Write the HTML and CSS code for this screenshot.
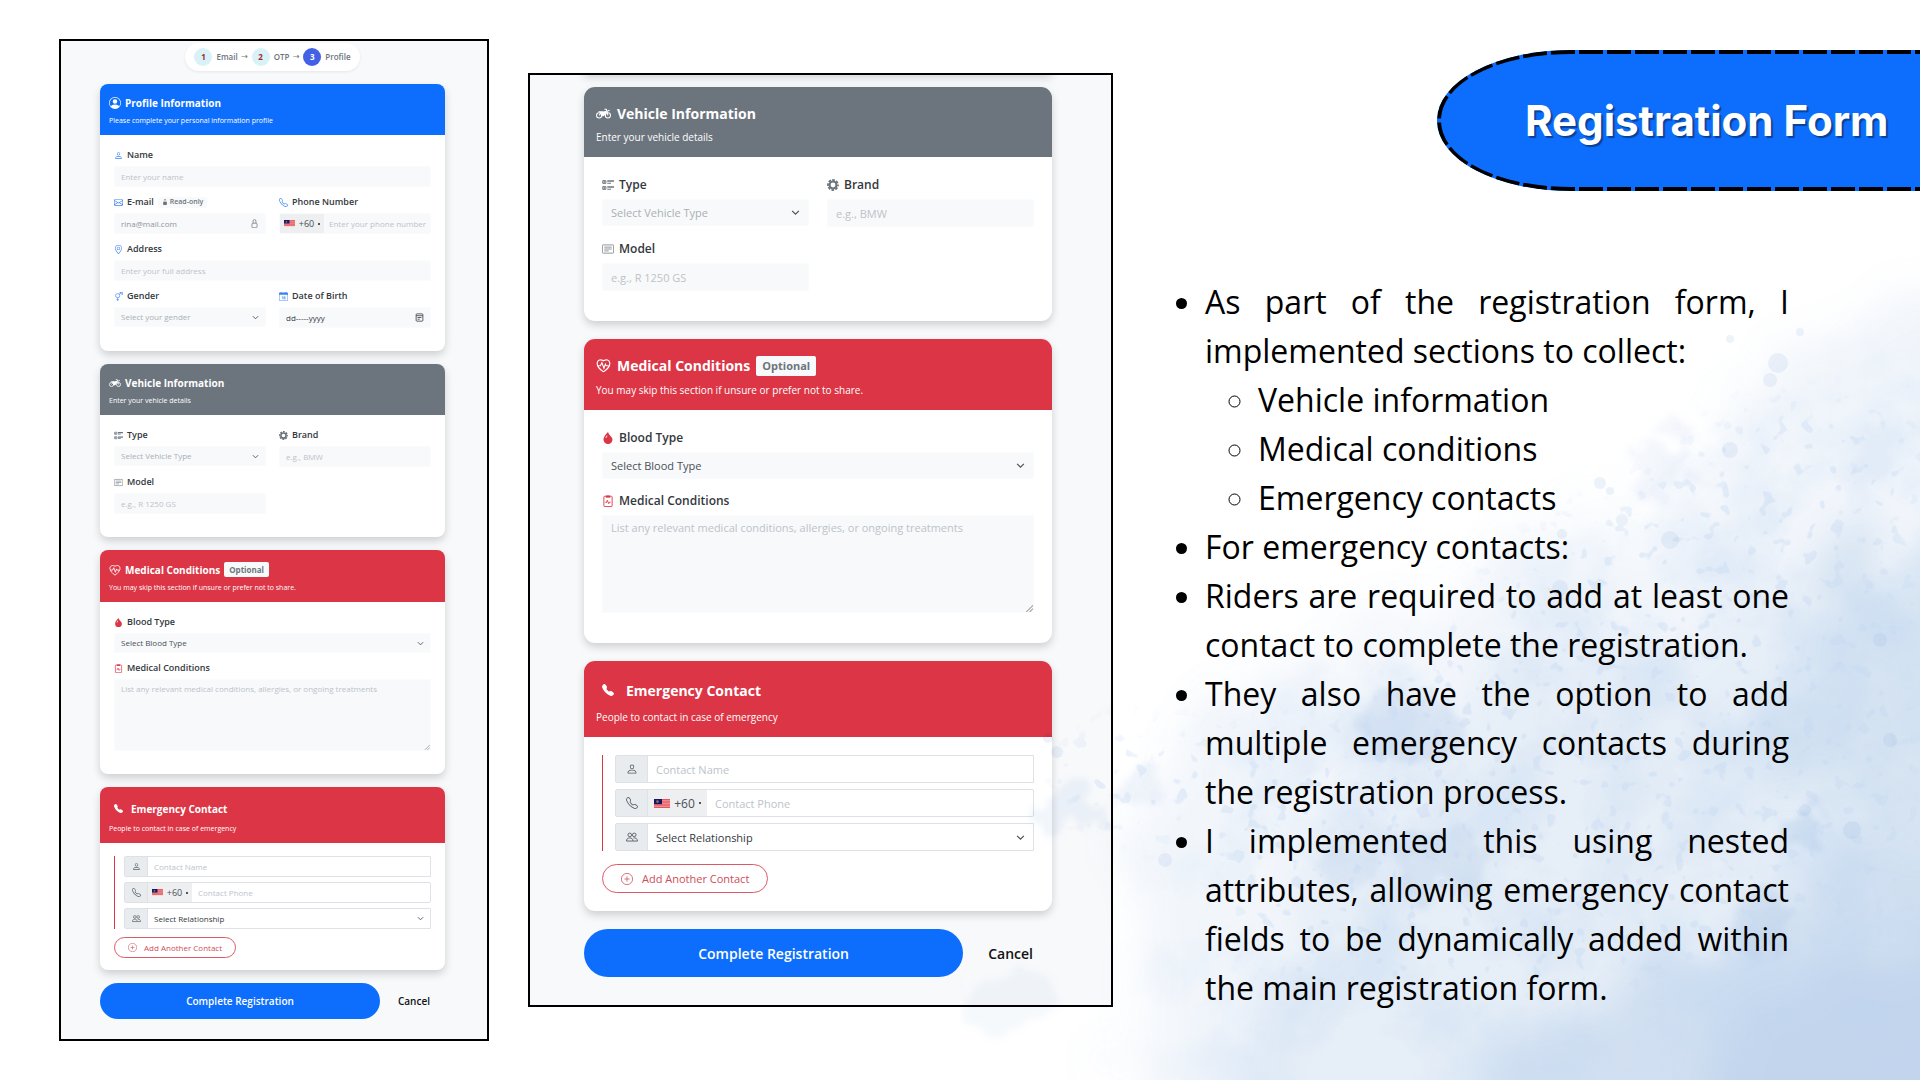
FILE: index.html
```html
<!DOCTYPE html>
<html lang="en">
<head>
<meta charset="utf-8">
<meta name="viewport" content="width=device-width, initial-scale=1">
<title>Registration Form</title>
<link rel="stylesheet" href="styles.css">
</head>
<body>

<svg class="sprite" aria-hidden="true">
  <symbol id="i-person-circle" viewBox="0 0 16 16"><path d="M11 6a3 3 0 1 1-6 0 3 3 0 0 1 6 0"/><path fill-rule="evenodd" d="M0 8a8 8 0 1 1 16 0A8 8 0 0 1 0 8m8-7a7 7 0 0 0-5.468 11.37C3.242 11.226 4.805 10 8 10s4.757 1.225 5.468 2.37A7 7 0 0 0 8 1"/></symbol>
  <symbol id="i-person" viewBox="0 0 16 16"><path d="M8 8a3 3 0 1 0 0-6 3 3 0 0 0 0 6m2-3a2 2 0 1 1-4 0 2 2 0 0 1 4 0m4 8c0 1-1 1-1 1H3s-1 0-1-1 1-4 6-4 6 3 6 4m-1-.004c-.001-.246-.154-.986-.832-1.664C11.516 10.68 10.289 10 8 10s-3.516.68-4.168 1.332c-.678.678-.83 1.418-.832 1.664z"/></symbol>
  <symbol id="i-people" viewBox="0 0 16 16"><g fill="none" stroke="currentColor" stroke-width="1.2"><circle cx="5" cy="5.2" r="2.4"/><circle cx="11" cy="5.2" r="2.4"/><path d="M.7 13.4c0-2.600 1.600-4.200 4.300-4.200s4.300 1.600 4.300 4.200zM10 9.300c3.400-.5 5.300 1.300 5.300 4.100H9.500"/></g></symbol>
  <symbol id="i-envelope" viewBox="0 0 16 16"><path d="M0 4a2 2 0 0 1 2-2h12a2 2 0 0 1 2 2v8a2 2 0 0 1-2 2H2a2 2 0 0 1-2-2zm2-1a1 1 0 0 0-1 1v.217l7 4.200 7-4.200V4a1 1 0 0 0-1-1zm13 2.383-4.708 2.825L15 11.105zm-.034 6.876-5.640-3.471L8 9.583l-1.326-.795-5.640 3.470A1 1 0 0 0 2 13h12a1 1 0 0 0 .966-.741M1 11.105l4.708-2.897L1 5.383z"/></symbol>
  <symbol id="i-lock-fill" viewBox="0 0 16 16"><path d="M8 1a2 2 0 0 1 2 2v4H6V3a2 2 0 0 1 2-2m3 6V3a3 3 0 0 0-6 0v4a2 2 0 0 0-2 2v5a2 2 0 0 0 2 2h6a2 2 0 0 0 2-2V9a2 2 0 0 0-2-2"/></symbol>
  <symbol id="i-lock" viewBox="0 0 16 16"><path fill="none" stroke="currentColor" stroke-width="1.300" d="M5.500 7.500V3.500a2.500 2.500 0 0 1 5 0v4M3.500 9a1.500 1.500 0 0 1 1.500-1.500h6A1.500 1.500 0 0 1 12.500 9v5a1.500 1.500 0 0 1-1.500 1.500H5A1.500 1.500 0 0 1 3.500 14z"/></symbol>
  <symbol id="i-phone" viewBox="0 0 16 16"><path d="M3.654 1.328a.678.678 0 0 0-1.015-.063L1.605 2.300c-.483.484-.661 1.169-.45 1.770a17.600 17.600 0 0 0 4.168 6.608 17.600 17.600 0 0 0 6.608 4.168c.601.211 1.286.033 1.770-.45l1.034-1.034a.678.678 0 0 0-.063-1.015l-2.307-1.794a.68.68 0 0 0-.58-.122l-2.190.547a1.750 1.750 0 0 1-1.657-.459L5.482 8.062a1.750 1.750 0 0 1-.46-1.657l.548-2.190a.68.68 0 0 0-.122-.58zM1.884.511a1.745 1.745 0 0 1 2.612.163L6.290 2.980c.329.423.445.974.315 1.494l-.547 2.190a.68.68 0 0 0 .178.643l2.457 2.457a.68.68 0 0 0 .644.178l2.189-.547a1.750 1.750 0 0 1 1.494.315l2.306 1.794c.829.645.905 1.870.163 2.611l-1.034 1.034c-.74.74-1.846 1.065-2.877.702a18.600 18.600 0 0 1-7.010-4.420 18.600 18.600 0 0 1-4.420-7.009c-.362-1.030-.037-2.137.703-2.877z"/></symbol>
  <symbol id="i-phone-fill" viewBox="0 0 16 16"><path d="M1.885.511a1.745 1.745 0 0 1 2.610.163L6.290 2.980c.329.423.445.974.315 1.494l-.547 2.190a.68.68 0 0 0 .178.643l2.457 2.457a.68.68 0 0 0 .644.178l2.189-.547a1.750 1.750 0 0 1 1.494.315l2.306 1.794c.829.645.905 1.870.163 2.611l-1.034 1.034c-.74.74-1.846 1.065-2.877.702a18.600 18.600 0 0 1-7.010-4.420 18.600 18.600 0 0 1-4.420-7.009c-.362-1.030-.037-2.137.703-2.877z"/></symbol>
  <symbol id="i-pin" viewBox="0 0 16 16"><path d="M12.166 8.940c-.524 1.062-1.234 2.120-1.960 3.070A32 32 0 0 1 8 14.580a32 32 0 0 1-2.206-2.570c-.726-.95-1.436-2.008-1.960-3.070C3.304 7.867 3 6.862 3 6a5 5 0 0 1 10 0c0 .862-.305 1.867-.834 2.940M8 16s6-5.686 6-10A6 6 0 0 0 2 6c0 4.314 6 10 6 10"/><path d="M8 8a2 2 0 1 1 0-4 2 2 0 0 1 0 4m0 1a3 3 0 1 0 0-6 3 3 0 0 0 0 6"/></symbol>
  <symbol id="i-gender" viewBox="0 0 16 16"><path fill="none" stroke="currentColor" stroke-width="1.200" d="M10.200 6.500a3.700 3.700 0 1 1-7.400 0 3.700 3.700 0 0 1 7.400 0M6.500 10.200V16M4.500 13.500h4M9.200 3.900 13 .8M10.500.6H15v4.200M10 1l4.500 3.500"/></symbol>
  <symbol id="i-calendar" viewBox="0 0 16 16"><path fill="none" stroke="currentColor" d="M.5 3v11a1.500 1.500 0 0 0 1.500 1.500h12a1.500 1.500 0 0 0 1.500-1.500V3"/><path d="M0 5V2.500A1.500 1.500 0 0 1 1.500 1H3V0h1.500v1h7V0H13v1h1.500A1.500 1.500 0 0 1 16 2.500V5z"/><path fill="none" stroke="currentColor" stroke-width=".9" d="M5 8.500 6.200 8v4.500M8.500 8.300h2.400v4.200H8.500zM8.500 10.400h2.400"/></symbol>
  <symbol id="i-picker" viewBox="0 0 16 16"><path fill="none" stroke="currentColor" stroke-width="1.400" d="M2 3a1.500 1.500 0 0 1 1.500-1.500h9A1.500 1.500 0 0 1 14 3v10a1.500 1.500 0 0 1-1.500 1.500h-9A1.500 1.500 0 0 1 2 13zM2 4.800h12M4.500 8h7M4.500 11h4"/></symbol>
  <symbol id="i-bike" viewBox="0 0 16 16"><g fill="none" stroke="currentColor" stroke-width="1.100"><circle cx="3.300" cy="10" r="2.700"/><circle cx="12.700" cy="10" r="2.700"/><path d="M3.300 10 6 6.500h5l-3 4H5.500M9 3.500h2L12.700 10M12 5.500l2.500-1"/></g><path d="M2 5.500h4.500l1 .8 3-1.300.8 1-3 4.500H6L5.500 8z"/></symbol>
  <symbol id="i-type" viewBox="0 0 16 16"><g fill="none" stroke="currentColor" stroke-width="1.300"><path d="M1 2.200h4.200v3.600H1zM1 10.200h4.200v3.600H1z"/></g><path d="M7 1.800h9v2H7zM7 5h5v1.200H7zM7 9.800h9v2H7zM7 13h5v1.200H7zM2 3h2v2H2zM2 11h2v2H2z"/></symbol>
  <symbol id="i-gear" viewBox="0 0 16 16"><g fill="none" stroke="currentColor"><circle cx="8" cy="8" r="4.600" stroke-width="2.800"/><circle cx="8" cy="8" r="6.700" stroke-width="2.400" stroke-dasharray="3.400 1.862" stroke-dashoffset="1.700"/></g></symbol>
  <symbol id="i-card" viewBox="0 0 16 16"><path fill="none" stroke="currentColor" d="M.5 3.500a1 1 0 0 1 1-1h13a1 1 0 0 1 1 1v9a1 1 0 0 1-1 1h-13a1 1 0 0 1-1-1zM3 5.500h10M3 8h10M3 10.500h6"/></symbol>
  <symbol id="i-heart" viewBox="0 0 16 16"><path fill="none" stroke="currentColor" stroke-width="1.200" d="M8 14.800C-3 7.500 1.500-.8 8 3c6.500-3.800 11 4.500 0 11.800M2.500 8.200h2.200L6.300 5l2.200 6L10 6.500l.9 1.700h2.600"/></symbol>
  <symbol id="i-drop" viewBox="0 0 16 16"><path fill-rule="evenodd" d="M8 16a6 6 0 0 0 6-6c0-1.655-1.122-2.904-2.432-4.362C10.254 4.176 8.750 2.503 8 0c0 0-6 5.686-6 10a6 6 0 0 0 6 6M6.646 4.646l.708.708c-.29.290-1.128 1.311-1.907 2.870l-.894-.448c.82-1.641 1.717-2.753 2.093-3.130"/></symbol>
  <symbol id="i-clip" viewBox="0 0 16 16"><path fill="none" stroke="currentColor" stroke-width="1.200" d="M5 1.800H3.300a.8.800 0 0 0-.8.800v12a.8.800 0 0 0 .8.800h9.400a.8.800 0 0 0 .8-.8v-12a.8.800 0 0 0-.8-.8H11M4.500 10H6l1-3 2 4.500L10 9.500h1.500"/><path d="M5 .5h6v3H5z"/></symbol>
  <symbol id="i-plus" viewBox="0 0 16 16"><path fill="none" stroke="currentColor" d="M8 .5a7.500 7.500 0 1 1 0 15 7.500 7.500 0 0 1 0-15M8 4.500v7M4.500 8h7"/></symbol>
  <symbol id="i-flag" viewBox="0 0 16 9"><path fill="#f08a8c" d="M0 0h16v9H0z"/><path fill="#e0575f" d="M8 0h8v1H8zM8 2.600h8v1H8zM0 5.500h16v1H0zM0 8h16v1H0z"/><path fill="#1b1464" d="M0 0h8v5.200H0z"/><circle cx="3.500" cy="2.600" r="1.300" fill="#8d7c5a"/></symbol>
</svg>

<main class="slide">

  <form class="panel panel--small">
    <ol class="steps">
      <li class="steps__item"><span class="steps__dot">1</span>Email</li>
      <li class="steps__arrow" aria-hidden="true">→</li>
      <li class="steps__item"><span class="steps__dot">2</span>OTP</li>
      <li class="steps__arrow" aria-hidden="true">→</li>
      <li class="steps__item"><span class="steps__dot steps__dot--on">3</span>Profile</li>
    </ol>

    <section class="card">
      <header class="card__head card__head--blue">
        <h2 class="card__title"><svg class="icon"><use href="#i-person-circle"/></svg>Profile Information</h2>
        <p class="card__sub">Please complete your personal information profile</p>
      </header>
      <div class="card__body tone-blue">
        <div class="field field--wide">
          <label class="field__label" for="a-name"><svg class="icon"><use href="#i-person"/></svg>Name</label>
          <input class="control" id="a-name" type="text" placeholder="Enter your name">
        </div>
        <div class="field">
          <label class="field__label" for="a-mail"><svg class="icon"><use href="#i-envelope"/></svg>E-mail <span class="readonly"><svg class="icon"><use href="#i-lock-fill"/></svg>Read-only</span></label>
          <div class="control control--box">
            <input class="bare bare--muted" id="a-mail" type="email" value="rina@mail.com" readonly>
            <svg class="icon icon--end"><use href="#i-lock"/></svg>
          </div>
        </div>
        <div class="field">
          <label class="field__label" for="a-phone"><svg class="icon"><use href="#i-phone"/></svg>Phone Number</label>
          <div class="control control--phone">
            <button class="dial" type="button" aria-label="Country code"><svg class="flag"><use href="#i-flag"/></svg>+60<span class="dial__caret"></span></button>
            <input class="bare" id="a-phone" type="tel" placeholder="Enter your phone number">
          </div>
        </div>
        <div class="field field--wide">
          <label class="field__label" for="a-address"><svg class="icon"><use href="#i-pin"/></svg>Address</label>
          <input class="control" id="a-address" type="text" placeholder="Enter your full address">
        </div>
        <div class="field">
          <label class="field__label" for="a-gender"><svg class="icon"><use href="#i-gender"/></svg>Gender</label>
          <select class="control control--select control--empty" id="a-gender"><option>Select your gender</option></select>
        </div>
        <div class="field">
          <label class="field__label" for="a-birth"><svg class="icon"><use href="#i-calendar"/></svg>Date of Birth</label>
          <div class="control control--box">
            <input class="bare bare--dark" id="a-birth" type="text" value="dd-----yyyy">
            <svg class="icon icon--end icon--dark"><use href="#i-picker"/></svg>
          </div>
        </div>
      </div>
    </section>

    <section class="card">
      <header class="card__head card__head--gray">
        <h2 class="card__title"><svg class="icon"><use href="#i-bike"/></svg>Vehicle Information</h2>
        <p class="card__sub">Enter your vehicle details</p>
      </header>
      <div class="card__body tone-gray">
        <div class="field">
          <label class="field__label" for="a-type"><svg class="icon"><use href="#i-type"/></svg>Type</label>
          <select class="control control--select control--empty" id="a-type"><option>Select Vehicle Type</option></select>
        </div>
        <div class="field">
          <label class="field__label" for="a-brand"><svg class="icon"><use href="#i-gear"/></svg>Brand</label>
          <input class="control" id="a-brand" type="text" placeholder="e.g., BMW">
        </div>
        <div class="field">
          <label class="field__label" for="a-model"><svg class="icon"><use href="#i-card"/></svg>Model</label>
          <input class="control" id="a-model" type="text" placeholder="e.g., R 1250 GS">
        </div>
      </div>
    </section>

    <section class="card">
      <header class="card__head card__head--red">
        <h2 class="card__title card__title--badge"><svg class="icon"><use href="#i-heart"/></svg>Medical Conditions<span class="badge">Optional</span></h2>
        <p class="card__sub">You may skip this section if unsure or prefer not to share.</p>
      </header>
      <div class="card__body tone-red">
        <div class="field field--wide">
          <label class="field__label" for="a-blood"><svg class="icon"><use href="#i-drop"/></svg>Blood Type</label>
          <select class="control control--select" id="a-blood"><option>Select Blood Type</option></select>
        </div>
        <div class="field field--wide">
          <label class="field__label" for="a-medical"><svg class="icon"><use href="#i-clip"/></svg>Medical Conditions</label>
          <textarea class="control control--area" id="a-medical" placeholder="List any relevant medical conditions, allergies, or ongoing treatments"></textarea>
        </div>
      </div>
    </section>

    <section class="card">
      <header class="card__head card__head--red">
        <h2 class="card__title card__title--tall"><svg class="icon"><use href="#i-phone-fill"/></svg>Emergency Contact</h2>
        <p class="card__sub">People to contact in case of emergency</p>
      </header>
      <div class="contacts">
        <div class="contacts__list">
          <div class="group"><label class="group__icon" for="a-cname" aria-label="Contact name"><svg class="icon"><use href="#i-person"/></svg></label><input class="bare" id="a-cname" type="text" placeholder="Contact Name"></div>
          <div class="group group--round"><label class="group__icon" for="a-cphone" aria-label="Contact phone"><svg class="icon"><use href="#i-phone"/></svg></label><button class="dial" type="button" aria-label="Country code"><svg class="flag"><use href="#i-flag"/></svg>+60<span class="dial__caret"></span></button><input class="bare" id="a-cphone" type="tel" placeholder="Contact Phone"></div>
          <div class="group"><label class="group__icon" for="a-crel" aria-label="Relationship"><svg class="icon"><use href="#i-people"/></svg></label><select class="bare control--select" id="a-crel"><option>Select Relationship</option></select></div>
        </div>
        <button class="add" type="button"><svg class="icon"><use href="#i-plus"/></svg>Add Another Contact</button>
      </div>
    </section>

    <div class="actions">
      <button class="submit" type="submit">Complete Registration</button>
      <a class="cancel" href="#">Cancel</a>
    </div>
  </form>

  <form class="panel panel--large">
    <section class="card">
      <header class="card__head card__head--gray">
        <h2 class="card__title"><svg class="icon"><use href="#i-bike"/></svg>Vehicle Information</h2>
        <p class="card__sub">Enter your vehicle details</p>
      </header>
      <div class="card__body tone-gray">
        <div class="field">
          <label class="field__label" for="b-type"><svg class="icon"><use href="#i-type"/></svg>Type</label>
          <select class="control control--select control--empty" id="b-type"><option>Select Vehicle Type</option></select>
        </div>
        <div class="field">
          <label class="field__label" for="b-brand"><svg class="icon"><use href="#i-gear"/></svg>Brand</label>
          <input class="control" id="b-brand" type="text" placeholder="e.g., BMW">
        </div>
        <div class="field">
          <label class="field__label" for="b-model"><svg class="icon"><use href="#i-card"/></svg>Model</label>
          <input class="control" id="b-model" type="text" placeholder="e.g., R 1250 GS">
        </div>
      </div>
    </section>

    <section class="card">
      <header class="card__head card__head--red">
        <h2 class="card__title card__title--badge"><svg class="icon"><use href="#i-heart"/></svg>Medical Conditions<span class="badge">Optional</span></h2>
        <p class="card__sub">You may skip this section if unsure or prefer not to share.</p>
      </header>
      <div class="card__body tone-red">
        <div class="field field--wide">
          <label class="field__label" for="b-blood"><svg class="icon"><use href="#i-drop"/></svg>Blood Type</label>
          <select class="control control--select" id="b-blood"><option>Select Blood Type</option></select>
        </div>
        <div class="field field--wide">
          <label class="field__label" for="b-medical"><svg class="icon"><use href="#i-clip"/></svg>Medical Conditions</label>
          <textarea class="control control--area" id="b-medical" placeholder="List any relevant medical conditions, allergies, or ongoing treatments"></textarea>
        </div>
      </div>
    </section>

    <section class="card">
      <header class="card__head card__head--red">
        <h2 class="card__title card__title--tall"><svg class="icon"><use href="#i-phone-fill"/></svg>Emergency Contact</h2>
        <p class="card__sub">People to contact in case of emergency</p>
      </header>
      <div class="contacts">
        <div class="contacts__list">
          <div class="group"><label class="group__icon" for="b-cname" aria-label="Contact name"><svg class="icon"><use href="#i-person"/></svg></label><input class="bare" id="b-cname" type="text" placeholder="Contact Name"></div>
          <div class="group group--round"><label class="group__icon" for="b-cphone" aria-label="Contact phone"><svg class="icon"><use href="#i-phone"/></svg></label><button class="dial" type="button" aria-label="Country code"><svg class="flag"><use href="#i-flag"/></svg>+60<span class="dial__caret"></span></button><input class="bare" id="b-cphone" type="tel" placeholder="Contact Phone"></div>
          <div class="group"><label class="group__icon" for="b-crel" aria-label="Relationship"><svg class="icon"><use href="#i-people"/></svg></label><select class="bare control--select" id="b-crel"><option>Select Relationship</option></select></div>
        </div>
        <button class="add" type="button"><svg class="icon"><use href="#i-plus"/></svg>Add Another Contact</button>
      </div>
    </section>

    <div class="actions">
      <button class="submit" type="submit">Complete Registration</button>
      <a class="cancel" href="#">Cancel</a>
    </div>
  </form>

  <article class="notes">
    <header class="banner">
      <svg class="banner__edge" viewBox="0 0 483 141" preserveAspectRatio="xMinYMid slice" aria-hidden="true">
        <g fill="none" stroke="#000" stroke-width="4" stroke-dasharray="24 4" stroke-dashoffset="-2">
          <path d="M2 70.500C2 32 58 2 134 2H1200"/>
          <path d="M2 70.500C2 109 58 139 134 139H1200"/>
        </g>
      </svg>
      <h1 class="banner__title">Registration Form</h1>
    </header>
    <ul class="points">
      <li>As part of the registration form, I implemented sections to collect:
        <ul class="points__sub">
          <li>Vehicle information</li>
          <li>Medical conditions</li>
          <li>Emergency contacts</li>
        </ul>
      </li>
      <li>For emergency contacts:</li>
      <li>Riders are required to add at least one contact to complete the registration.</li>
      <li>They also have the option to add multiple emergency contacts during the registration process.</li>
      <li>I implemented this using nested attributes, allowing emergency contact fields to be dynamically added within the main registration form.</li>
    </ul>
  </article>

  <svg class="wash" viewBox="0 0 960 860" aria-hidden="true">
    <defs>
      <filter id="soft" x="-20%" y="-20%" width="140%" height="140%"><feTurbulence type="fractalNoise" baseFrequency=".012" numOctaves="5" seed="4"/><feDisplacementMap in="SourceGraphic" scale="150" xChannelSelector="R" yChannelSelector="G"/><feGaussianBlur stdDeviation="18"/></filter>
      <filter id="rough" x="-20%" y="-20%" width="140%" height="140%"><feTurbulence type="fractalNoise" baseFrequency=".03" numOctaves="5" seed="9"/><feDisplacementMap in="SourceGraphic" scale="70" xChannelSelector="R" yChannelSelector="G"/><feGaussianBlur stdDeviation="3"/></filter>
      <filter id="cloud" x="-20%" y="-20%" width="140%" height="140%"><feTurbulence type="fractalNoise" baseFrequency=".011" numOctaves="6" seed="33"/><feColorMatrix values="0 0 0 0 .5  0 0 0 0 .66  0 0 0 0 .87  0 0 3 0 -1.100" result="n"/><feGaussianBlur in="SourceGraphic" stdDeviation="36" result="s"/><feComposite in="n" in2="s" operator="in"/></filter>
      <filter id="drops" x="-20%" y="-20%" width="140%" height="140%"><feTurbulence type="fractalNoise" baseFrequency=".07" numOctaves="2" seed="21"/><feColorMatrix values="0 0 0 0 .55  0 0 0 0 .69  0 0 0 0 .88  0 14 0 0 -9" result="n"/><feGaussianBlur in="SourceGraphic" stdDeviation="25" result="s"/><feComposite in="n" in2="s" operator="in"/></filter>
    </defs>
    <g filter="url(#soft)" fill="#7fa5da">
      <path opacity=".1" d="M1060 60 850 110 770 230 650 320 560 340 400 410 300 450 200 520 180 640 200 760 140 960H1060z"/>
      <path opacity=".1" d="M1060 240 900 340 800 400 640 440 500 480 420 600 330 680 250 960H1060z"/>
      <path opacity=".15" d="M1060 260 920 330 850 420 800 500 880 620 1060 700z"/>
      <path opacity=".2" d="M1060 640 860 640 760 740 560 800 480 960H1060z"/>
      <path opacity=".18" d="M1060 720 880 740 760 820 760 960H1060z"/>
    </g>
    <g filter="url(#cloud)" opacity=".3"><path d="M1000 120 830 170 720 260 520 380 300 480 220 580 200 860H1000z"/></g>
    <g filter="url(#rough)" fill="#8fb1de">
      <ellipse opacity=".18" cx="450" cy="510" rx="55" ry="42"/>
      <ellipse opacity=".17" cx="480" cy="640" rx="48" ry="36"/>
      <ellipse opacity=".14" cx="380" cy="650" rx="26" ry="28"/>
      <ellipse opacity=".1" cx="700" cy="240" rx="30" ry="36"/>
      <ellipse opacity=".12" cx="110" cy="590" rx="34" ry="22"/>
      <ellipse opacity=".13" cx="180" cy="570" rx="22" ry="26"/>
      <ellipse opacity=".08" cx="40" cy="780" rx="46" ry="30"/>
      <ellipse opacity=".22" cx="850" cy="610" rx="18" ry="20"/>
      <ellipse opacity=".17" cx="800" cy="700" rx="24" ry="34"/>
    </g>
    <g filter="url(#drops)" opacity=".38"><path d="M960 190 800 180 690 260 560 330 400 500 260 520 130 510 90 560 150 620 240 610 300 760 600 780 960 700z"/></g>
    <g fill="#8fb1de" opacity=".15">
      <circle cx="662" cy="300" r="6"/><circle cx="818" cy="143" r="10"/><circle cx="810" cy="160" r="7"/><circle cx="770" cy="119" r="4"/><circle cx="840" cy="112" r="4"/><circle cx="770" cy="230" r="8"/><circle cx="640" cy="263" r="6"/><circle cx="650" cy="271" r="4"/><circle cx="710" cy="320" r="9"/><circle cx="602" cy="314" r="5"/><circle cx="600" cy="368" r="8"/><circle cx="88" cy="518" r="5"/><circle cx="97" cy="532" r="6"/><circle cx="205" cy="640" r="7"/><circle cx="920" cy="420" r="7"/><circle cx="892" cy="610" r="9"/><circle cx="845" cy="590" r="6"/><circle cx="930" cy="520" r="7"/>
    </g>
  </svg>
</main>
</body>
</html>
```
FILE: styles.css
```css
* { box-sizing: border-box; }

body {
  margin: 0;
  background: #fff;
  color: #000;
  font-family: "Open Sans", "Noto Sans", sans-serif;
}

h1, h2, p, ol, ul { margin: 0; padding: 0; }

input, select, textarea, button { font: inherit; color: inherit; margin: 0; }

.sprite { display: block; width: 0; height: 0; }

.slide {
  position: relative;
  display: grid;
  grid-template-columns: 430fr 585fr 768fr;
  column-gap: 39px;
  align-items: start;
  min-height: 100vh;
  padding-left: 59px;
  background: #fff;
  overflow: hidden;
}

/* ---------- form panels ---------- */

.panel {
  position: relative;
  display: flex;
  flex-direction: column;
  gap: var(--card-gap);
  min-width: 0;
  border: 2px solid #000;
  background: #f8f9fb;
  overflow: hidden;
  font-size: var(--text);
  line-height: var(--label-line);
}

.panel--small {
  --text: 8px;
  --sub: 7px;
  --label: 9px;
  --title: 10px;
  --action: 10px;
  --label-line: 14px;
  --label-gap: 4px;
  --row-gap: 8px;
  --col-gap: 13px;
  --card-gap: 13px;
  --radius: 8px;
  --head-pad: 11px 9px 7px;
  --head-gap: 3px;
  --title-line: 16px;
  --title-badge: 17px;
  --title-tall: 21px;
  --sub-line: 14px;
  --title-icon: 12px;
  --title-gap: 4px;
  --tall-icon: 9px;
  --tall-pad: 5px;
  --tall-gap: 8px;
  --body-pad: 13px 14px 23px;
  --label-icon: 9px;
  --label-space: 4px;
  --input: 21px;
  --select: 20px;
  --area: 72px;
  --pad: 6px;
  --chevron: 7px;
  --dial: 44px;
  --flag: 11px;
  --addon: 23px;
  --group-gap: 5px;
  --bar-pad: 9px;
  --contacts-pad: 13px 14px 12px;
  --add-top: 8px;
  --add: 21px;
  --add-pad: 13px;
  --add-gap: 7px;
  --submit: 36px;
  --cancel-gap: 18px;
  --cancel-pad: 15px;
  --badge-pad: 5px;
  --badge: 15px;
  margin-top: 39px;
  padding: 2px 42px 20px 39px;
}

.panel--large {
  --text: 11px;
  --sub: 10px;
  --label: 12px;
  --title: 14px;
  --action: 14px;
  --label-line: 19px;
  --label-gap: 5px;
  --row-gap: 12px;
  --col-gap: 18px;
  --card-gap: 18px;
  --radius: 11px;
  --head-pad: 15px 12px 11px;
  --head-gap: 4px;
  --title-line: 22px;
  --title-badge: 23px;
  --title-tall: 28px;
  --sub-line: 18px;
  --title-icon: 15px;
  --title-gap: 6px;
  --tall-icon: 12px;
  --tall-pad: 6px;
  --tall-gap: 12px;
  --body-pad: 18px 18px 30px;
  --label-icon: 12px;
  --label-space: 5px;
  --input: 28px;
  --select: 27px;
  --area: 98px;
  --pad: 8px;
  --chevron: 9px;
  --dial: 59px;
  --flag: 16px;
  --addon: 32px;
  --group-gap: 6px;
  --bar-pad: 12px;
  --contacts-pad: 18px;
  --add-top: 13px;
  --add: 29px;
  --add-pad: 18px;
  --add-gap: 9px;
  --submit: 48px;
  --cancel-gap: 25px;
  --cancel-pad: 19px;
  --badge-pad: 6px;
  --badge: 20px;
  margin-top: 73px;
  padding: 12px 59px 28px 54px;
}

/* lower edge of the card that is scrolled out of view */
.panel--large::before {
  content: "";
  position: absolute;
  top: -12px;
  left: 54px;
  right: 59px;
  height: 10px;
  box-shadow: 0 4px 10px rgba(0, 0, 0, .18);
}

.icon { flex: none; display: block; fill: currentColor; }

.steps {
  display: flex;
  align-items: center;
  align-self: center;
  gap: 3px;
  height: 28px;
  padding: 0 9px;
  border-radius: 14px;
  background: #fff;
  box-shadow: 0 1px 3px rgba(0, 0, 0, .08);
  list-style: none;
  color: #6c757d;
  font-weight: 600;
}

.steps__item { display: flex; align-items: center; gap: 4px; }

.steps__arrow { width: 8px; text-align: center; font-family: "DejaVu Sans", sans-serif; font-weight: 400; }

.steps__dot {
  display: grid;
  place-items: center;
  width: 18px;
  height: 18px;
  border-radius: 50%;
  background: #d9f2f7;
  color: #a3262f;
  font-weight: 700;
}

.steps__dot--on { background: #4361e5; color: #fff; }

.card {
  border-radius: var(--radius);
  background: #fff;
  box-shadow: 0 4px 9px rgba(0, 0, 0, .17);
}

.card__head {
  padding: var(--head-pad);
  border-radius: var(--radius) var(--radius) 0 0;
  color: #fff;
}

.card__head--blue { background: #0d6efd; }
.card__head--gray { background: #6c757d; }
.card__head--red { background: #dc3545; }

.card__title {
  display: flex;
  align-items: center;
  gap: var(--title-gap);
  height: var(--title-line);
  font-size: var(--title);
  font-weight: 700;
  white-space: nowrap;
}

.card__title .icon { width: var(--title-icon); height: var(--title-icon); }
.card__title--badge { height: var(--title-badge); }
.card__title--tall { height: var(--title-tall); gap: var(--tall-gap); padding-left: var(--tall-pad); }
.card__title--tall .icon { width: var(--tall-icon); height: var(--tall-icon); }

.card__sub { margin-top: var(--head-gap); font-size: var(--sub); line-height: var(--sub-line); }

.badge {
  display: flex;
  align-items: center;
  height: var(--badge);
  padding: 0 var(--badge-pad);
  border-radius: 2px;
  background: #f8f9fa;
  color: #6c757d;
  font-size: var(--text);
  font-weight: 700;
}

.card__body {
  display: grid;
  grid-template-columns: 1fr 1fr;
  gap: var(--row-gap) var(--col-gap);
  padding: var(--body-pad);
}

.tone-blue { --tone: #3b82f0; }
.tone-gray { --tone: #6c757d; }
.tone-red { --tone: #dc3545; }

.field { display: flex; flex-direction: column; gap: var(--label-gap); min-width: 0; }
.field--wide { grid-column: 1 / -1; }

.field__label {
  display: flex;
  align-items: center;
  gap: var(--label-space);
  height: var(--label-line);
  color: #33383d;
  font-size: var(--label);
  font-weight: 600;
  white-space: nowrap;
}

.field__label > .icon { width: var(--label-icon); height: var(--label-icon); color: var(--tone); }

.readonly {
  display: flex;
  align-items: center;
  gap: 2px;
  height: 11px;
  padding: 0 4px;
  border-radius: 2px;
  background: #f8f9fa;
  color: #6c757d;
  font-size: 7px;
}

.readonly .icon { width: 6px; height: 6px; }

.control {
  display: block;
  width: 100%;
  height: var(--input);
  padding: 0 var(--pad);
  border: 1px solid #fafbfc;
  border-radius: 2px;
  background-color: #f8f9fa;
  color: #495057;
}

.control::placeholder, .bare::placeholder { color: #bcc3ca; opacity: 1; }

.control--box { display: flex; align-items: center; }
.control--phone { display: flex; padding: 0; }
.control--phone .bare { padding: 0 0 0 5px; }

.control--select {
  height: var(--select);
  appearance: none;
  background-image: url("data:image/svg+xml,%3Csvg xmlns='http://www.w3.org/2000/svg' viewBox='0 0 8 8'%3E%3Cpath d='M1 2.500 4 5.500 7 2.500' fill='none' stroke='%23495057' stroke-width='1'/%3E%3C/svg%3E");
  background-repeat: no-repeat;
  background-position: right var(--pad) center;
  background-size: var(--chevron);
}

.control--empty { color: #a9b0b7; }

.control--area {
  height: var(--area);
  padding: 2px var(--pad);
  resize: none;
  background-image: url("data:image/svg+xml,%3Csvg xmlns='http://www.w3.org/2000/svg' viewBox='0 0 8 8'%3E%3Cpath d='M2 8 8 2M5 8 8 5' stroke='%23999' stroke-width='.9'/%3E%3C/svg%3E");
  background-repeat: no-repeat;
  background-position: right bottom;
  background-size: var(--chevron);
}

.bare {
  flex: 1;
  width: 0;
  min-width: 0;
  height: 100%;
  padding: 0;
  border: 0;
  background-color: transparent;
  color: #33383d;
}

.bare--muted { color: #8f969d; }
.icon--end { width: 9px; height: 9px; color: #6c757d; }
.icon--dark { color: #33383d; }

.dial {
  display: flex;
  align-items: center;
  justify-content: center;
  gap: 4px;
  width: var(--dial);
  padding: 0;
  border: 0;
  background: #eeeff0;
  color: #495057;
  font-size: calc(var(--text) + 1px);
  white-space: nowrap;
}

.flag { flex: none; width: var(--flag); height: calc(var(--flag) * 9 / 16); }
.dial__caret { width: 2px; height: 2px; background: #555; }

.contacts { padding: var(--contacts-pad); }

.contacts__list {
  display: flex;
  flex-direction: column;
  gap: var(--group-gap);
  padding-left: var(--bar-pad);
  border-left: 1px solid #dc3545;
}

.group { display: flex; height: var(--input); border: 1px solid #dee2e6; border-radius: 2px 0 0 2px; }
.group--round { border-radius: 2px; }
.group > .bare { padding: 0 var(--pad); }

.group__icon {
  display: grid;
  place-items: center;
  width: var(--addon);
  border-right: 1px solid #dee2e6;
  background: #e9ecef;
  color: #555b61;
}

.group__icon .icon { width: var(--label-icon); height: var(--label-icon); }

.add {
  display: flex;
  align-items: center;
  gap: var(--add-gap);
  height: var(--add);
  margin-top: var(--add-top);
  padding: 0 var(--add-pad);
  border: 1px solid #dc5a66;
  border-radius: 15px;
  background: #fff;
  color: #d04c58;
}

.add .icon { width: var(--label-icon); height: var(--label-icon); }

.actions { display: flex; align-items: center; gap: var(--cancel-gap); padding-right: var(--cancel-pad); font-size: var(--action); font-weight: 600; }

.submit {
  flex: 1;
  height: var(--submit);
  border: 0;
  border-radius: 24px;
  background: #0d6efd;
  color: #fff;
}

.cancel { color: #111; text-decoration: none; }

/* ---------- notes ---------- */

.notes { min-width: 0; padding-top: 50px; }

.banner {
  position: relative;
  display: flex;
  align-items: center;
  height: 141px;
  margin-left: 285px;
  padding-left: 88px;
  border-radius: 134px 0 0 134px / 70px 0 0 70px;
  background: #0d6efd;
  overflow: hidden;
}

.banner__edge { position: absolute; inset: 0; width: 100%; height: 100%; }

.banner__title {
  position: relative;
  color: #fff;
  font: 700 42px/56px Inter, "Open Sans", sans-serif;
  text-shadow: 2px 2px 1px rgba(0, 0, 0, .4);
  white-space: nowrap;
}

.points {
  margin-top: 86px;
  padding: 0 131px 0 53px;
  font: 400 32px/49px "Open Sans", "Noto Sans", sans-serif;
  text-align: justify;
}

.points__sub { padding-left: 53px; list-style: circle; }

.wash {
  position: absolute;
  right: 0;
  bottom: 0;
  width: 960px;
  height: 860px;
  pointer-events: none;
  mix-blend-mode: multiply;
}
```
